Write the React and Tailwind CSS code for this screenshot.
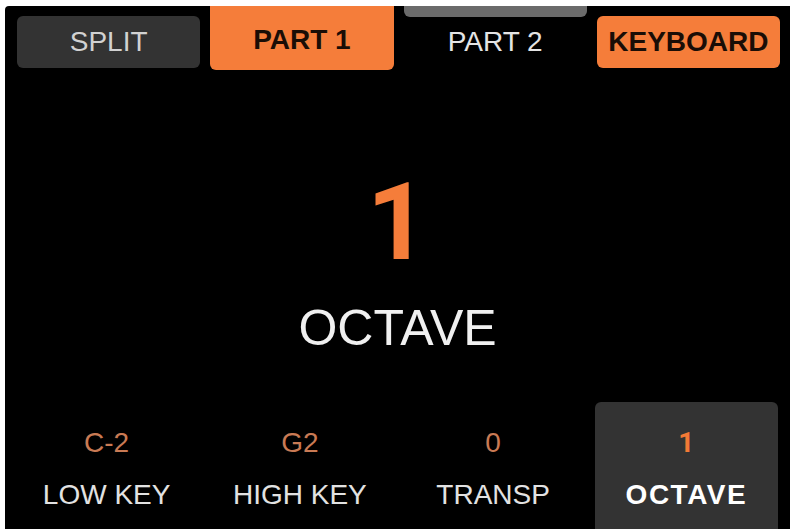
import React from "react";

const font = { fontFamily: '"Liberation Sans", Arial, sans-serif' };
const digitFont = { fontFamily: 'Roboto, "Liberation Sans", Arial, sans-serif' };

export default function App() {
  const bottom = [
    { value: "C-2", label: "LOW KEY" },
    { value: "G2", label: "HIGH KEY" },
    { value: "0", label: "TRANSP" },
  ];
  return (
    <div className="w-[790px] h-[529px] bg-white pt-[6px] pl-[5px] overflow-hidden" style={font}>
      <div className="w-full h-full bg-black rounded-tl-[4px] flex flex-col">
        {/* Top tabs */}
        <div className="grid grid-cols-4 gap-[10px] pl-[12px] pr-[10px] h-[64px]">
          <div className="flex flex-col">
            <div className="mt-[10px] h-[52px] rounded-[6px] bg-[#333333] flex items-center justify-center text-[28px] leading-none text-[#d2d2d2]">
              SPLIT
            </div>
          </div>
          <div className="h-[64px] rounded-b-[6px] bg-[#f57d3a] flex items-center justify-center pt-[4px] text-[28px] leading-none font-bold text-[#1a0d06]">
            PART 1
          </div>
          <div className="flex flex-col">
            <div className="h-[11px] rounded-b-[6px] bg-[#6b6b6b]"></div>
            <div className="flex-1 flex items-center justify-center pb-[4px] text-[28px] leading-none text-[#e4e4e4]">
              PART 2
            </div>
          </div>
          <div className="flex flex-col">
            <div className="mt-[10px] h-[52px] rounded-[6px] bg-[#f57d3a] flex items-center justify-center text-[28px] leading-none font-bold text-[#1a0d06]">
              KEYBOARD
            </div>
          </div>
        </div>

        {/* Middle */}
        <div className="flex-1 flex flex-col items-center pt-[99px]">
          <div className="text-[107px] leading-none font-bold text-[#f57d3a]" style={digitFont}>1</div>
          <div className="mt-[27px] text-[50px] leading-none text-[#f0f0f0]">OCTAVE</div>
        </div>

        {/* Bottom row */}
        <div className="grid grid-cols-4 gap-[10px] pl-[10px] pr-[12px] h-[127px]">
          {bottom.map((b) => (
            <div key={b.label} className="flex flex-col items-center pt-[27px]">
              <div className="text-[28px] leading-none text-[#c97a54]">{b.value}</div>
              <div className="mt-[24px] text-[28px] leading-none text-[#e2e2e2]">{b.label}</div>
            </div>
          ))}
          <div className="flex flex-col items-center pt-[27px] bg-[#333333] rounded-t-[6px]">
            <div className="text-[28px] leading-none font-bold text-[#f27a36]" style={digitFont}>1</div>
            <div className="mt-[24px] text-[28px] leading-none font-bold tracking-[1.5px] text-white">OCTAVE</div>
          </div>
        </div>
      </div>
    </div>
  );
}
